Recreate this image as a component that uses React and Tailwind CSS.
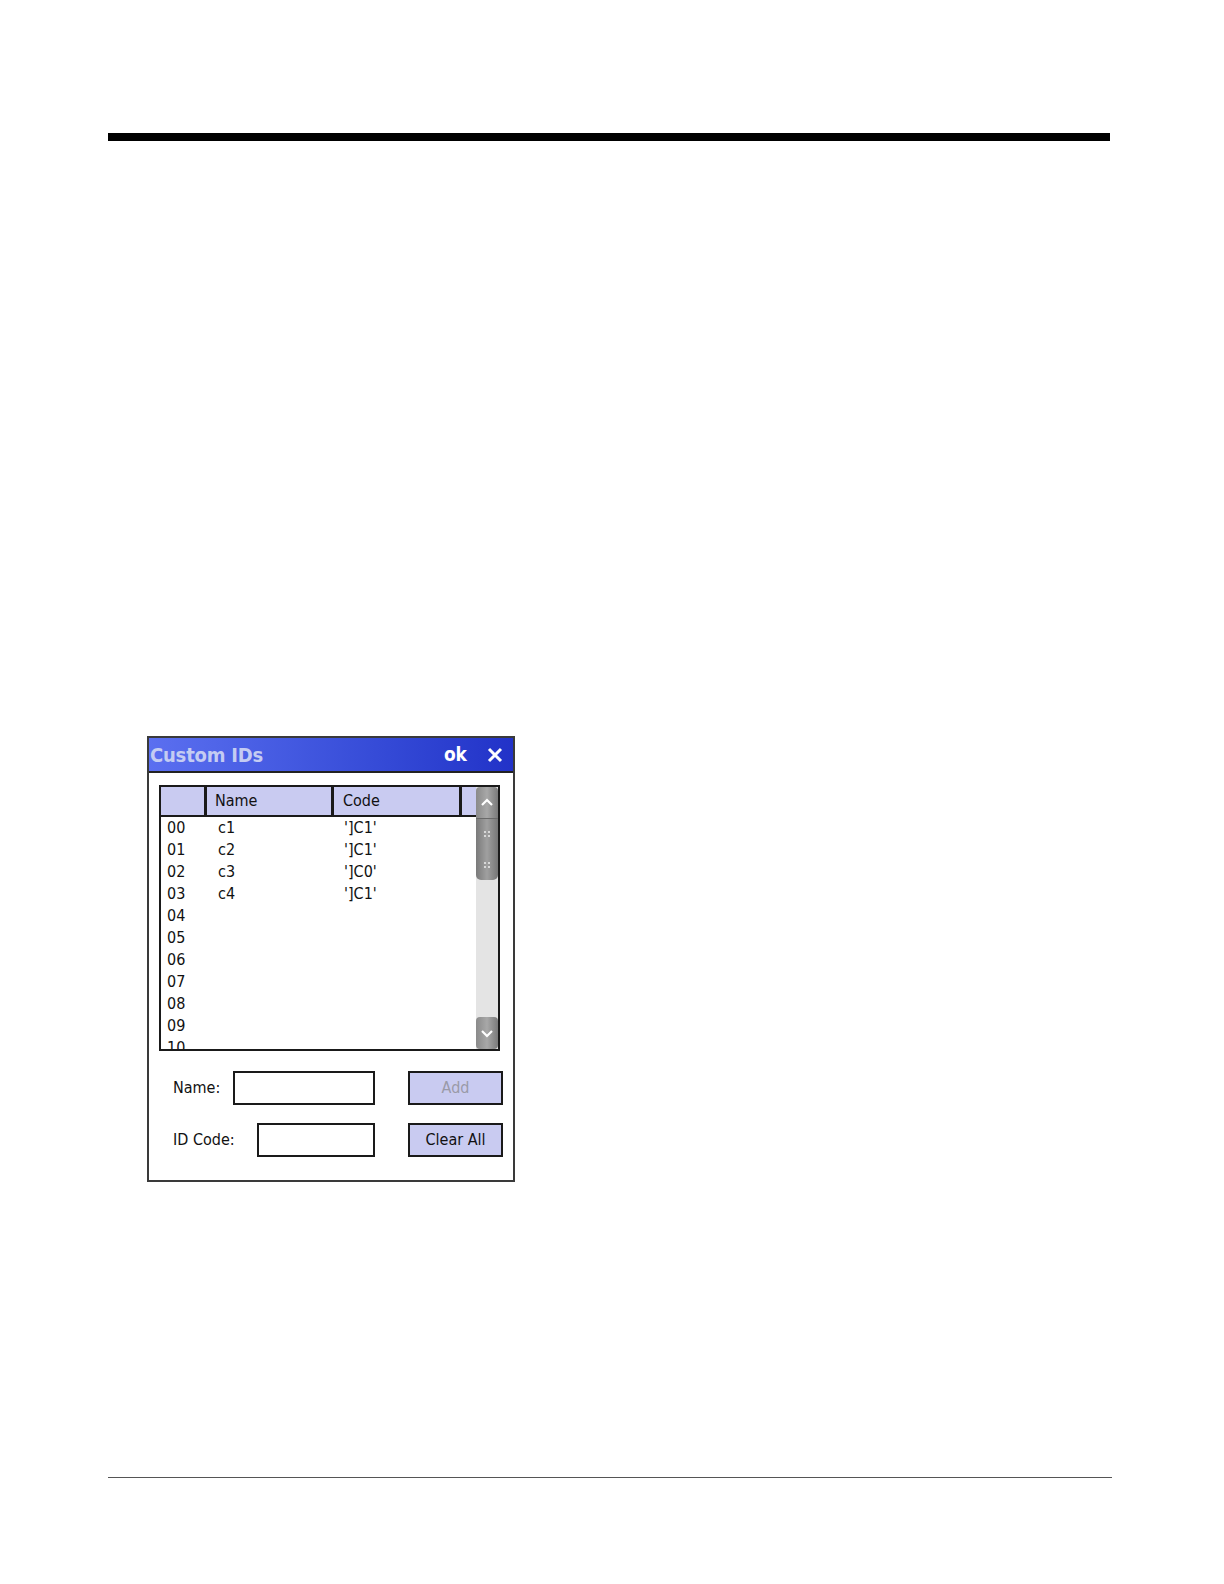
import React from "react";

const rows = [
  { id: "00", name: "c1", code: "']C1'" },
  { id: "01", name: "c2", code: "']C1'" },
  { id: "02", name: "c3", code: "']C0'" },
  { id: "03", name: "c4", code: "']C1'" },
  { id: "04" },
  { id: "05" },
  { id: "06" },
  { id: "07" },
  { id: "08" },
  { id: "09" },
  { id: "10" },
];

const font = { fontFamily: '"DejaVu Sans Condensed", "DejaVu Sans", Tahoma, sans-serif' };

const Grip = () => (
  <svg width="8" height="6" viewBox="0 0 8 6">
    <rect x="1" y="0" width="2" height="2" fill="#d8d8d8" />
    <rect x="5" y="0" width="2" height="2" fill="#d8d8d8" />
    <rect x="1" y="4" width="2" height="2" fill="#d8d8d8" />
    <rect x="5" y="4" width="2" height="2" fill="#d8d8d8" />
  </svg>
);

const ScrollBar = () => (
  <div className="w-[22px] h-full bg-[#e4e4e4] flex flex-col justify-between">
    <div>
      {/* up button */}
      <div className="h-[31px] rounded-t-[4px] bg-gradient-to-r from-[#8a8a8a] via-[#a8a8a8] to-[#7a7a7a] flex items-center justify-center">
        <svg width="14" height="9" viewBox="0 0 14 9">
          <path d="M2 7 L7 2 L12 7" fill="none" stroke="#fff" strokeWidth="2.2" />
        </svg>
      </div>
      {/* thumb */}
      <div className="h-[62px] rounded-b-[5px] bg-gradient-to-r from-[#7a7a7a] via-[#a0a0a0] to-[#767676] border-t border-[#6a6a6a] flex flex-col items-center justify-around">
        <Grip />
        <Grip />
      </div>
    </div>
    {/* down button */}
    <div className="h-[32px] rounded-[4px] bg-gradient-to-r from-[#8a8a8a] via-[#a8a8a8] to-[#7a7a7a] flex items-center justify-center">
      <svg width="14" height="9" viewBox="0 0 14 9">
        <path d="M2 2 L7 7 L12 2" fill="none" stroke="#fff" strokeWidth="2.2" />
      </svg>
    </div>
  </div>
);

const App = () => {
  return (
    <div className="w-[1224px] h-[1584px] bg-white relative overflow-hidden" style={font}>
      {/* top rule */}
      <div className="pt-[133px] pl-[108px]">
        <div className="w-[1002px] h-[8px] bg-black"></div>
      </div>

      {/* dialog */}
      <div className="mt-[595px] ml-[147px] w-[368px] h-[446px] border-2 border-[#3a3a3a] flex flex-col">
        {/* title bar */}
        <div className="h-[35px] bg-gradient-to-r from-[#5b6ff0] to-[#2232c8] border-b-2 border-[#222] flex items-center justify-between pl-[1px] pr-[10px]">
          <span className="text-[20px] font-bold text-[#c4ccf2] leading-none tracking-[-0.2px]">Custom IDs</span>
          <div className="flex items-center gap-[20px]">
            <span className="text-[19px] font-bold text-white leading-none">ok</span>
            <svg width="16" height="16" viewBox="0 0 16 16">
              <path d="M2 2 L14 14 M14 2 L2 14" stroke="#fff" strokeWidth="3" />
            </svg>
          </div>
        </div>

        <div className="flex-1 bg-white pt-[12px] pl-[10px]">
          {/* list */}
          <div className="w-[341px] h-[266px] border-2 border-[#1a1a1a] flex overflow-hidden">
            <div className="flex-1 flex flex-col overflow-hidden">
              <div className="h-[30px] flex bg-[#c9cbf1] border-b-2 border-[#1a1a1a] text-[16px] text-[#111] shrink-0">
                <div className="w-[46px] border-r-[3px] border-[#1a1a1a]"></div>
                <div className="w-[127px] border-r-[3px] border-[#1a1a1a] pl-[8px] flex items-center">Name</div>
                <div className="w-[128px] border-r-[3px] border-[#1a1a1a] pl-[9px] flex items-center">Code</div>
                <div className="flex-1"></div>
              </div>
              <div className="flex flex-col text-[16px] text-[#111]">
                {rows.map((r) => (
                  <div key={r.id} className="h-[22px] flex items-center shrink-0">
                    <span className="w-[57px] pl-[6px]">{r.id}</span>
                    <span className="w-[126px]">{r.name || ""}</span>
                    <span>{r.code || ""}</span>
                  </div>
                ))}
              </div>
            </div>
            <ScrollBar />
          </div>

          {/* form */}
          <div className="mt-[20px] flex flex-col gap-[18px] text-[16px] text-[#111]">
            <div className="flex items-center">
              <span className="ml-[14px] w-[60px]">Name:</span>
              <div className="w-[142px] h-[34px] border-2 border-[#1a1a1a] bg-white"></div>
              <button className="ml-[33px] w-[95px] h-[34px] border-2 border-[#1a1a1a] bg-[#c9cbf1] text-[#9a9aa8]">Add</button>
            </div>
            <div className="flex items-center">
              <span className="ml-[14px] w-[84px]">ID Code:</span>
              <div className="w-[118px] h-[34px] border-2 border-[#1a1a1a] bg-white"></div>
              <button className="ml-[33px] w-[95px] h-[34px] border-2 border-[#1a1a1a] bg-[#c9cbf1] text-[#111]">Clear All</button>
            </div>
          </div>
        </div>
      </div>

      {/* bottom rule */}
      <div className="mt-[295px] ml-[108px] w-[1004px] h-[1px] bg-[#555]"></div>
    </div>
  );
};

export default App;
